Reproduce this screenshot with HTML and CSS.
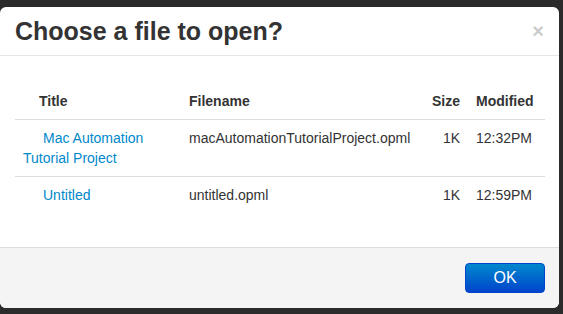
FILE: index.html
```html
<!DOCTYPE html>
<html lang="en">
<head>
    <meta charset="UTF-8">
    <title>Choose a file to open?</title>
    <link rel="stylesheet" href="styles.css">
</head>
<body>
    <div class="modal">
        <div class="modal-header">
            <button class="close" type="button">&times;</button>
            <h3>Choose a file to open?</h3>
        </div>

        <div class="modal-body">
            <table class="file-table">
                <thead>
                    <tr>
                        <th class="col-title">Title</th>
                        <th class="col-file">Filename</th>
                        <th class="col-size">Size</th>
                        <th class="col-mod">Modified</th>
                    </tr>
                </thead>
                <tbody>
                    <tr>
                        <td class="col-title"><a href="#">Mac Automation Tutorial Project</a></td>
                        <td class="col-file">macAutomationTutorialProject.opml</td>
                        <td class="col-size">1K</td>
                        <td class="col-mod">12:32PM</td>
                    </tr>
                    <tr>
                        <td class="col-title"><a href="#">Untitled</a></td>
                        <td class="col-file">untitled.opml</td>
                        <td class="col-size">1K</td>
                        <td class="col-mod">12:59PM</td>
                    </tr>
                </tbody>
            </table>
        </div>

        <div class="modal-footer">
            <button class="btn-primary" type="button">OK</button>
        </div>
    </div>
</body>
</html>
```

FILE: styles.css
```css
* {
    box-sizing: border-box;
    margin: 0;
    padding: 0;
}

html, body {
    height: 100%;
}

body {
    font-family: "Liberation Sans", Arial, sans-serif;
    font-size: 14px;
    line-height: 20px;
    color: #333;
    background-color: #2b2b2b;
    padding-top: 7px;
    overflow: hidden;
}

.modal {
    width: 559px;
    height: 301px;
    background-color: white;
    border-radius: 6px;
    overflow: hidden;
    display: flex;
    flex-direction: column;
}

.modal-header {
    padding: 9px 15px;
    border-bottom: 1px solid #e5e5e5;
}

.modal-header h3 {
    font-size: 25px;
    line-height: 30px;
    font-weight: bold;
    color: #333;
}

.close {
    float: right;
    margin-top: 5px;
    background: none;
    border: none;
    font-family: "Liberation Sans", Arial, sans-serif;
    font-size: 20px;
    font-weight: bold;
    line-height: 20px;
    color: #000;
    opacity: 0.2;
    cursor: pointer;
}

.modal-body {
    flex: 1;
    padding: 27px 14px 0 15px;
}

.file-table {
    width: 530px;
    border-collapse: collapse;
}

.file-table th,
.file-table td {
    padding: 8px;
    text-align: left;
    vertical-align: top;
}

.file-table th {
    font-weight: bold;
}

.file-table tbody td {
    border-top: 1px solid #ddd;
}

.file-table thead tr {
    height: 36px;
}

.col-title {
    width: 166px;
}

th.col-title {
    text-indent: 16px;
}

td.col-title {
    text-indent: 20px;
}

.col-file {
    width: 239px;
}

.col-size {
    width: 48px;
}

.file-table .col-size {
    text-align: right;
}

.col-mod {
    width: 77px;
}

a {
    color: #0088cc;
    text-decoration: none;
}

.modal-footer {
    height: 61px;
    padding: 15px 14px 15px 15px;
    background-color: #f4f4f4;
    border-top: 1px solid #ddd;
    display: flex;
    justify-content: flex-end;
}

.btn-primary {
    width: 80px;
    height: 30px;
    font-family: "Liberation Sans", Arial, sans-serif;
    font-size: 16px;
    color: white;
    background-image: linear-gradient(to bottom, #0088cc, #0044cc);
    border: 1px solid #0044cc;
    border-radius: 4px;
    cursor: pointer;
}
```
